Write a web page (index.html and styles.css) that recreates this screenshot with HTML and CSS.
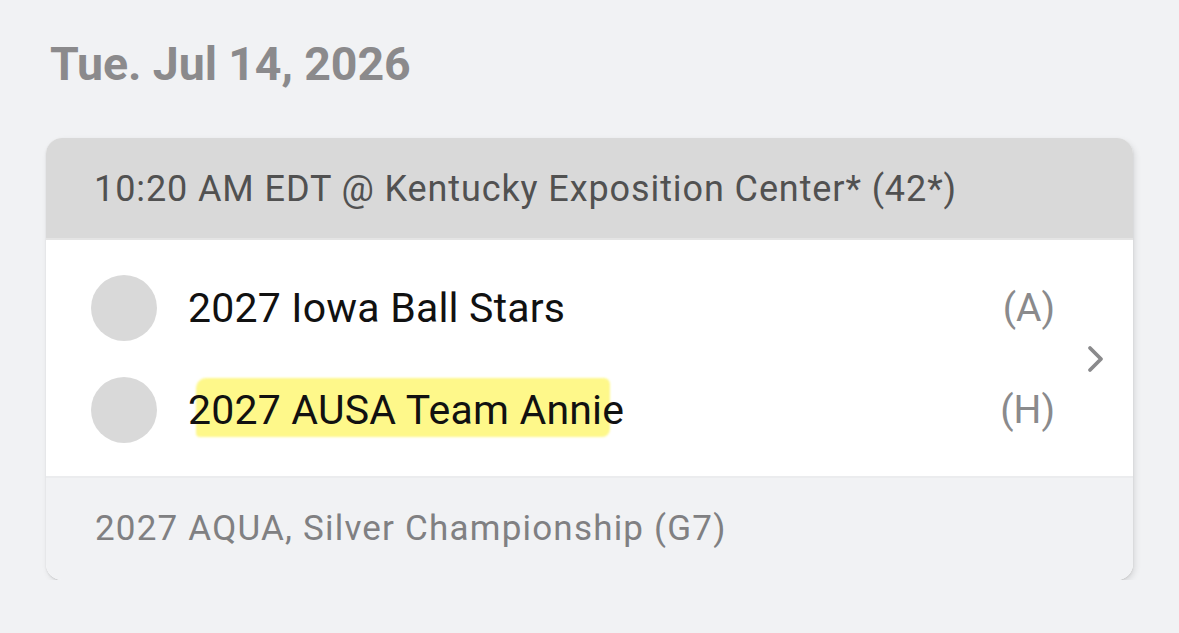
FILE: index.html
```html
<!DOCTYPE html>
<html lang="en">
<head>
<meta charset="utf-8">
<title>Schedule</title>
<link rel="stylesheet" href="styles.css">
</head>
<body>
<main class="page">
  <h1 class="date">Tue. Jul 14, 2026</h1>
  <section class="card">
    <header class="card-head">10:20 AM EDT @ Kentucky Exposition Center* (42*)</header>
    <div class="card-body">
      <div class="teams">
        <div class="team">
          <span class="avatar"></span>
          <span class="name">2027 Iowa Ball Stars</span>
          <span class="side">(A)</span>
        </div>
        <div class="team">
          <span class="avatar"></span>
          <span class="name"><span class="marker"></span><span class="name-text">2027 AUSA Team Annie</span></span>
          <span class="side">(H)</span>
        </div>
      </div>
      <div class="chev">
        <svg width="18" height="28" viewBox="0 0 18 28" aria-hidden="true"><path d="M3 3 L14 14 L3 25" fill="none" stroke="#8a8a8c" stroke-width="3.8" stroke-linecap="round" stroke-linejoin="round"/></svg>
      </div>
    </div>
    <footer class="card-foot">2027 AQUA, Silver Championship (G7)</footer>
  </section>
</main>
</body>
</html>
```
FILE: styles.css
```css
html, body {
  margin: 0;
  padding: 0;
  background: #f1f2f4;
}
body {
  font-family: Roboto, "Noto Sans", sans-serif;
}
.page {
  padding: 40px 46px 0 46px;
  width: 1087px;
}
.date {
  margin: 0 0 50px 4px;
  font-size: 46.5px;
  line-height: 48px;
  font-weight: 700;
  color: #8b8a8c;
  letter-spacing: -0.1px;
}
.card {
  background: #ffffff;
  border-radius: 16px;
  overflow: hidden;
  box-shadow: 0 1px 2px rgba(0,0,0,0.10), 2px 3px 6px rgba(0,0,0,0.10);
}
.card-head {
  height: 102px;
  display: flex;
  align-items: center;
  padding-left: 48px;
  background: #d9d9d9;
  color: #515151;
  font-size: 36px;
  letter-spacing: 0.9px;
  box-shadow: inset 0 -2px 0 #e4e4e4;
}
.card-body {
  display: flex;
  align-items: center;
  padding: 17px 0 15px 0;
  background: #ffffff;
}
.teams {
  flex: 1;
  display: flex;
  flex-direction: column;
}
.team {
  height: 102px;
  display: flex;
  align-items: center;
  padding-left: 45px;
}
.avatar {
  width: 66px;
  height: 66px;
  border-radius: 50%;
  background: #d9d9d9;
  flex: none;
}
.name {
  position: relative;
  margin-left: 31px;
  flex: 1;
  font-size: 41px;
  line-height: 48px;
  color: #111111;
  letter-spacing: 0.2px;
}
.name-text {
  position: relative;
}
.marker {
  position: absolute;
  left: 8px;
  top: -8px;
  width: 414px;
  height: 59px;
  background: #fef88a;
  border-radius: 10px 6px 8px 4px;
  filter: blur(0.8px);
}
.side {
  font-size: 39px;
  color: #8a8a8c;
  margin-right: 20px;
}
.chev {
  width: 58px;
  display: flex;
  align-items: center;
}
.chev svg {
  display: block;
  margin-left: 12px;
}
.card-foot {
  height: 104px;
  display: flex;
  align-items: center;
  padding-left: 49px;
  background: #f1f2f4;
  color: #808082;
  font-size: 35px;
  letter-spacing: 1.2px;
  box-shadow: inset 0 2px 0 #ebecee;
}
```
